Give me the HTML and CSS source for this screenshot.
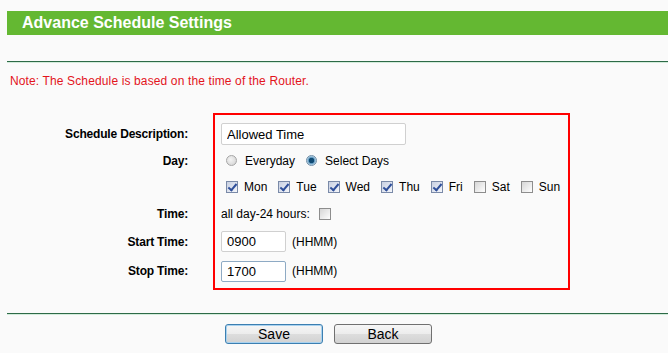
FILE: index.html
```html
<!DOCTYPE html>
<html lang="en">

<head>
    <meta charset="UTF-8">
    <meta name="viewport" content="width=device-width, initial-scale=1.0">
    <title>Advance Schedule Settings</title>
    <link rel="stylesheet" href="styles.css">
</head>

<body>
    <div class="header">Advance Schedule Settings</div>
    <div class="rule"></div>
    <p class="note">Note: The Schedule is based on the time of the Router.</p>

    <div class="form">
        <div class="labels">
            <span>Schedule Description:</span>
            <span>Day:</span>
            <span></span>
            <span>Time:</span>
            <span>Start Time:</span>
            <span>Stop Time:</span>
        </div>
        <div class="box">
            <div class="row">
                <input class="text desc" type="text" value="Allowed Time">
            </div>
            <div class="row">
                <label class="opt radio-opt"><input type="radio" name="day">Everyday</label>
                <label class="opt radio-opt"><input type="radio" name="day" checked>Select Days</label>
            </div>
            <div class="row days">
                <label class="opt"><input type="checkbox" checked>Mon</label>
                <label class="opt"><input type="checkbox" checked>Tue</label>
                <label class="opt"><input type="checkbox" checked>Wed</label>
                <label class="opt"><input type="checkbox" checked>Thu</label>
                <label class="opt"><input type="checkbox" checked>Fri</label>
                <label class="opt"><input type="checkbox">Sat</label>
                <label class="opt"><input type="checkbox">Sun</label>
            </div>
            <div class="row">
                <span>all day-24 hours:</span>
                <input class="allday" type="checkbox">
            </div>
            <div class="row">
                <input class="text time" type="text" value="0900">
                <span class="unit">(HHMM)</span>
            </div>
            <div class="row">
                <input class="text time active" type="text" value="1700">
                <span class="unit">(HHMM)</span>
            </div>
        </div>
    </div>

    <div class="rule bottom"></div>

    <div class="buttons">
        <button class="btn primary">Save</button>
        <button class="btn">Back</button>
    </div>
</body>

</html>
```

FILE: styles.css
```css
* {
    padding: 0;
    margin: 0;
    box-sizing: border-box;
}

body {
    background: #fafafa;
    font-family: "Liberation Sans", Arial, sans-serif;
    font-size: 12px;
    color: #000;
}

.header {
    margin: 11px 0 0 7px;
    height: 24px;
    line-height: 24px;
    padding-left: 15px;
    background: #64b832;
    color: #fff;
    font-weight: bold;
    font-size: 16px;
}

.rule {
    margin: 26px 0 0 7px;
    height: 2px;
    border-top: 1px solid #2d6a47;
    border-bottom: 1px solid #d3ecdb;
}

.note {
    margin-top: 11px;
    padding-left: 10px;
    line-height: 14px;
    color: #e3141c;
    letter-spacing: 0.13px;
}

.form {
    display: flex;
    margin-top: 25px;
}

.labels,
.box {
    display: grid;
    grid-template-rows: 26px 27px 26px 27px 29px 30px;
    align-items: center;
}

.labels {
    width: 188px;
    padding-top: 8px;
    text-align: right;
    font-weight: bold;
    letter-spacing: -0.18px;
}

.box {
    margin-left: 25px;
    width: 357px;
    height: 177px;
    padding: 6px 0 0 6px;
    border: 2px solid #f00;
    align-content: start;
}

.row {
    display: flex;
    align-items: center;
}

.text {
    font-family: "Liberation Sans", Arial, sans-serif;
    font-size: 13px;
    background: #fff;
    border: 1px solid #d0d0d0;
    border-radius: 2px;
    padding: 0 5px;
    outline: none;
}

.desc {
    width: 185px;
    height: 22px;
}

.time {
    width: 65px;
    height: 21px;
}

.time.active {
    border-color: #8eaac4;
}

.unit {
    margin-left: 6px;
}

.opt {
    display: flex;
    align-items: center;
    margin-right: 6px;
}

.radio-opt {
    margin-right: 6px;
}

input[type="checkbox"],
input[type="radio"] {
    appearance: none;
    width: 12px;
    height: 12px;
    margin: 0 6px 0 5px;
    flex-shrink: 0;
    position: relative;
}

input[type="checkbox"] {
    border: 1px solid #8d8d8d;
    background: linear-gradient(135deg, #d6d6d6 0%, #f2f2f2 70%, #fff 100%);
}

input[type="checkbox"]:checked {
    border-color: #7a8aa8;
    background: linear-gradient(135deg, #c8d0e2 0%, #e6eaf3 70%, #f6f7fb 100%);
}

input[type="checkbox"]:checked::after {
    content: "";
    position: absolute;
    left: 3px;
    top: 0px;
    width: 3px;
    height: 7px;
    border: solid #2f4f9a;
    border-width: 0 2px 2px 0;
    transform: rotate(40deg);
}

input[type="radio"] {
    width: 11px;
    height: 11px;
    margin-right: 8px;
    border-radius: 50%;
    border: 1px solid #a6a6a6;
    background: radial-gradient(circle at 40% 40%, #f4f4f4 0%, #cfcfcf 100%);
}

input[type="radio"]:checked {
    border-color: #6f8ea8;
    background: radial-gradient(circle, #0f4a73 0 2.5px, #5f9ac2 3px, #d9e6ef 5px);
}

.allday {
    margin-left: 9px !important;
}

.bottom {
    margin-top: 23px;
}

.buttons {
    display: flex;
    gap: 11px;
    padding-left: 225px;
    margin-top: 9px;
}

.btn {
    width: 98px;
    height: 20px;
    font-family: "Liberation Sans", Arial, sans-serif;
    font-size: 14px;
    color: #000;
    border: 1px solid #707070;
    border-radius: 3px;
    background: linear-gradient(#f6f6f6 0%, #ececec 50%, #dddddd 51%, #d2d2d2 100%);
}

.btn.primary {
    border-color: #3c7fb1;
    box-shadow: inset 0 0 0 1px #a9d2ef;
}
```
